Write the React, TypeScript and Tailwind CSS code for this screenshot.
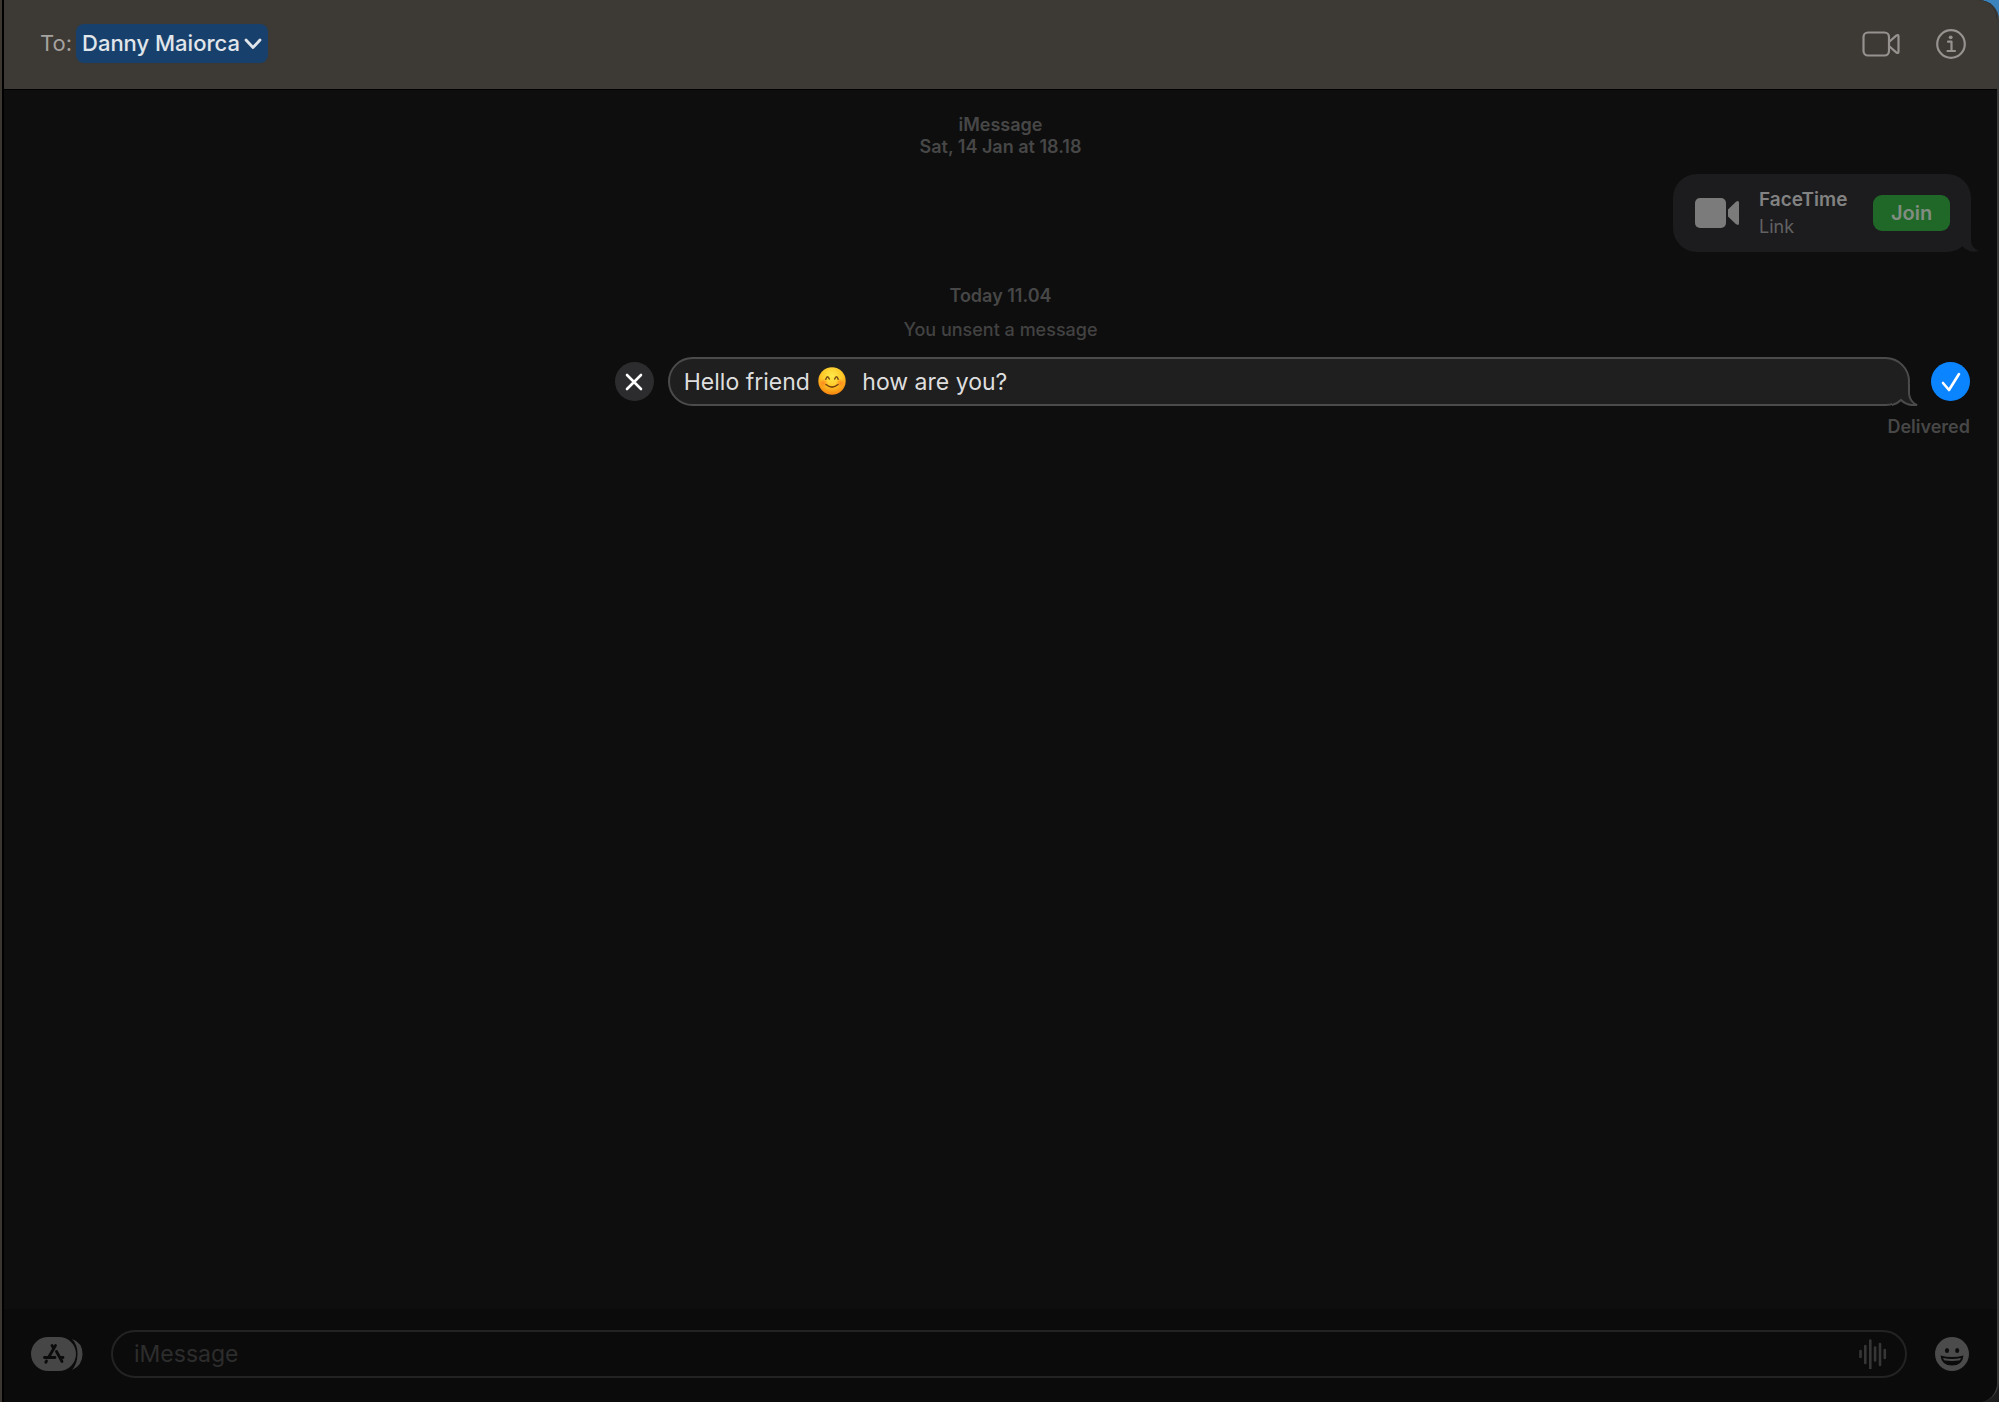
import { useState } from 'react';

function VideoOutline() {
  return (
    <svg viewBox="0 0 38 26" className="h-[26px] w-[38px]" fill="none" stroke="currentColor" strokeWidth="2.2" strokeLinejoin="round">
      <rect x="1.5" y="1.5" width="25.5" height="23" rx="4.5" />
      <path d="M27 11 34.2 4.7Q36.5 3 36.5 5.5V20.5Q36.5 23 34.2 21.3L27 15" />
    </svg>
  );
}

function InfoIcon() {
  return (
    <svg viewBox="0 0 30 30" className="size-[30px]" fill="none" stroke="currentColor" strokeWidth="2.2">
      <circle cx="15" cy="15" r="13.8" />
      <circle cx="14.7" cy="8.3" r="1.9" fill="currentColor" stroke="none" />
      <path d="M12 12.7h3.5v9M11.5 22h7.5" strokeLinecap="round" strokeLinejoin="round" />
    </svg>
  );
}

function VideoSolid() {
  return (
    <svg viewBox="0 0 44 30" className="h-[30px] w-11 shrink-0" fill="currentColor">
      <rect width="31" height="30" rx="5" />
      <path d="M33 11.5 40.5 4.2Q44 1.6 44 5V25Q44 28.4 40.5 25.8L33 18.5Z" />
    </svg>
  );
}

function SmileEmoji() {
  return (
    <svg viewBox="0 0 28 28" className="size-7">
      <defs>
        <radialGradient id="face" cx="50%" cy="32%" r="68%">
          <stop offset="0" stopColor="#ffe94a" />
          <stop offset="0.55" stopColor="#ffc928" />
          <stop offset="1" stopColor="#f5820d" />
        </radialGradient>
        <radialGradient id="cheek">
          <stop offset="0" stopColor="#ff7a1c" stopOpacity="0.8" />
          <stop offset="1" stopColor="#ff7a1c" stopOpacity="0" />
        </radialGradient>
      </defs>
      <circle cx="14" cy="14" r="13.7" fill="url(#face)" />
      <circle cx="5.5" cy="16" r="4.5" fill="url(#cheek)" />
      <circle cx="22.5" cy="16" r="4.5" fill="url(#cheek)" />
      <path d="M7.8 12.2Q9.5 7.5 11.3 12M16.700 12Q18.500 7.500 20.200 12.200" fill="none" stroke="#7a4c12" strokeWidth="1.500" strokeLinecap="round" />
      <path d="M8 17.500Q14 22.800 20 17.500" fill="none" stroke="#7d4610" strokeWidth="1.500" strokeLinecap="round" />
    </svg>
  );
}

function AppStoreIcon() {
  return (
    <svg viewBox="0 0 52 34" className="h-[34px] w-[52px]">
      <path d="M41 2Q51.5 5.5 51.5 17T41 33Q46.5 26.5 46.5 17T41 2Z" fill="#464646" />
      <rect width="45" height="34" rx="17" fill="#464646" />
      <g stroke="#0b0b0b" strokeWidth="2.8" strokeLinecap="round" fill="none">
        <path d="M24.5 8.5 17.5 20.500M21 8.500 22.500 11M13.500 20.500H24M29.500 20.500H32M25.500 14.500 31 24.500M15.500 24 14.800 25.300" />
      </g>
    </svg>
  );
}

function WaveIcon() {
  return (
    <svg viewBox="0 0 28 30" className="h-[30px] w-7" stroke="#363636" strokeWidth="2.6" strokeLinecap="round">
      <path d="M1.5 12v6M6.3 7v17M11.3 1.5v28M16.1 8.5v13M21 5v21M25.8 11v8" />
    </svg>
  );
}

function GrinIcon() {
  return (
    <svg viewBox="0 0 34 34" className="size-[34px]">
      <circle cx="17" cy="17" r="17" fill="#4b4b4b" />
      <ellipse cx="12" cy="13.5" rx="2" ry="2.6" fill="#0b0b0b" />
      <ellipse cx="22.2" cy="13.5" rx="2" ry="2.6" fill="#0b0b0b" />
      <path d="M5.5 18.5Q17 21.5 28.5 18.5Q27.5 28.5 17 28.5T5.500 18.500Z" fill="#0b0b0b" />
      <path d="M8 21Q17 23.200 26 21L25 23.200Q17 24.800 9 23.200Z" fill="#4b4b4b" />
    </svg>
  );
}

export default function App() {
  // the wide spaces leave room for the emoji drawn over the field
  const [message, setMessage] = useState('Hello friend\u2003\u2003 how are you?');
  const [draft, setDraft] = useState('');

  return (
    <div className="min-h-screen border-l-2 border-[#3b362f] bg-linear-to-b from-[#3b83bd] to-[#1c1c1c] font-['Inter','Liberation_Sans',sans-serif]">
      <div className="flex min-h-screen flex-col overflow-hidden rounded-r-[20px] border-r-2 border-l-2 border-r-[#3a3a39] border-l-black bg-[#0e0e0e]">
        <header className="flex h-[90px] items-center justify-between border-b border-black bg-[#3d3935] pr-[31px] pb-[2px] pl-9">
          <div className="flex items-center gap-1 text-[22px]">
            <span className="text-[#a5a29f]">To:</span>
            <button type="button" className="flex h-[39px] items-center gap-1 rounded-lg bg-[#17416c] px-[6px] font-medium text-[#e1e6eb]">
              Danny Maiorca
              <svg viewBox="0 0 18 12" className="h-3 w-[18px]" fill="none" stroke="currentColor" strokeWidth="2.8" strokeLinecap="round" strokeLinejoin="round">
                <path d="M2 2 9 9.5 16 2" />
              </svg>
            </button>
          </div>
          <div className="flex items-center gap-9 text-[#96928f]">
            <button type="button" aria-label="Start video call"><VideoOutline /></button>
            <button type="button" aria-label="Details"><InfoIcon /></button>
          </div>
        </header>

        <main className="flex flex-1 flex-col pt-6 text-lg text-[#474747]">
          <p className="text-center leading-[22px] font-semibold">
            iMessage<br />Sat, 14 Jan at 18.18
          </p>

          <section className="relative mt-4 mr-[26px] flex h-[78px] items-center self-end rounded-[24px] bg-[#1c1c1e] pr-[21px] pl-[22px]">
            <svg viewBox="0 0 24 24" className="absolute -right-2 bottom-0 size-6" fill="#1c1c1e">
              <path d="M16 0V12Q16 20 24 23Q15 26 7 18Z" />
            </svg>
            <span className="text-[#7b7b7b]"><VideoSolid /></span>
            <div className="ml-5 w-[94px]">
              <h2 className="text-[19px] leading-7 font-semibold text-[#828282]">FaceTime</h2>
              <p className="text-lg leading-[26px] text-[#626264]">Link</p>
            </div>
            <button type="button" className="relative ml-5 h-9 w-[77px] rounded-[9px] bg-[#1f6828] text-xl font-semibold text-[#828d82]">Join</button>
          </section>

          <p className="mt-[33px] text-center leading-[22px] font-semibold">Today 11.04</p>
          <p className="mt-3 text-center leading-[22px] font-medium text-[#424242]">You unsent a message</p>

          <form className="mt-4 mr-[27px] flex w-[68%] items-center self-end" onSubmit={(e) => e.preventDefault()}>
            <button type="button" aria-label="Cancel edit" className="flex size-[39px] shrink-0 items-center justify-center rounded-full bg-[#2c2c2e] text-white">
              <svg viewBox="0 0 18 18" className="size-[18px]" stroke="currentColor" strokeWidth="2.6" strokeLinecap="round">
                <path d="M2 2 16 16M16 2 2 16" />
              </svg>
            </button>
            <div className="relative ml-[14px] flex-1">
              <input
                aria-label="Edit message"
                value={message}
                onChange={(e) => setMessage(e.target.value)}
                className="block h-[49px] w-full rounded-full border-2 border-[#4b4b4b] bg-[#1f1f1f] px-[14px] text-[23px] text-[#dedede] outline-none"
              />
              <span className="pointer-events-none absolute top-[10px] left-[150px]"><SmileEmoji /></span>
              <svg viewBox="0 0 26 22" className="absolute -right-2 bottom-0 h-[22px] w-[26px]">
                <path d="M16 0H18V10Q19 18 25 21Q15 22 9 16Q5 20 0 21V12Z" fill="#1f1f1f" />
                <path d="M17 0V10Q18 18 25 21Q15 22 9 16Q5 20 0 21" fill="none" stroke="#4b4b4b" strokeWidth="2" />
              </svg>
            </div>
            <button type="submit" aria-label="Save edit" className="ml-[21px] flex size-[39px] shrink-0 items-center justify-center rounded-full bg-[#0a84ff] text-white">
              <svg viewBox="0 0 20 20" className="size-5" fill="none" stroke="currentColor" strokeWidth="2.6" strokeLinecap="round" strokeLinejoin="round">
                <path d="M2 11 8 18 18 2" />
              </svg>
            </button>
          </form>
          <p className="mt-[10px] mr-[27px] text-right leading-[22px] font-semibold">Delivered</p>
        </main>

        <footer className="flex h-[93px] items-center bg-[#0b0b0b] pr-[28px] pb-[4px] pl-[27px]">
          <button type="button" aria-label="Apps"><AppStoreIcon /></button>
          <div className="relative ml-7 flex-1">
            <input
              aria-label="iMessage"
              placeholder="iMessage"
              value={draft}
              onChange={(e) => setDraft(e.target.value)}
              className="block h-12 w-full rounded-full border-2 border-[#232323] bg-transparent px-[21px] text-[23px] text-[#dedede] outline-none placeholder:text-[#2d2d2d]"
            />
            <button type="button" aria-label="Record audio" className="absolute top-[9px] right-5"><WaveIcon /></button>
          </div>
          <button type="button" aria-label="Emoji" className="ml-7"><GrinIcon /></button>
        </footer>
      </div>
    </div>
  );
}
